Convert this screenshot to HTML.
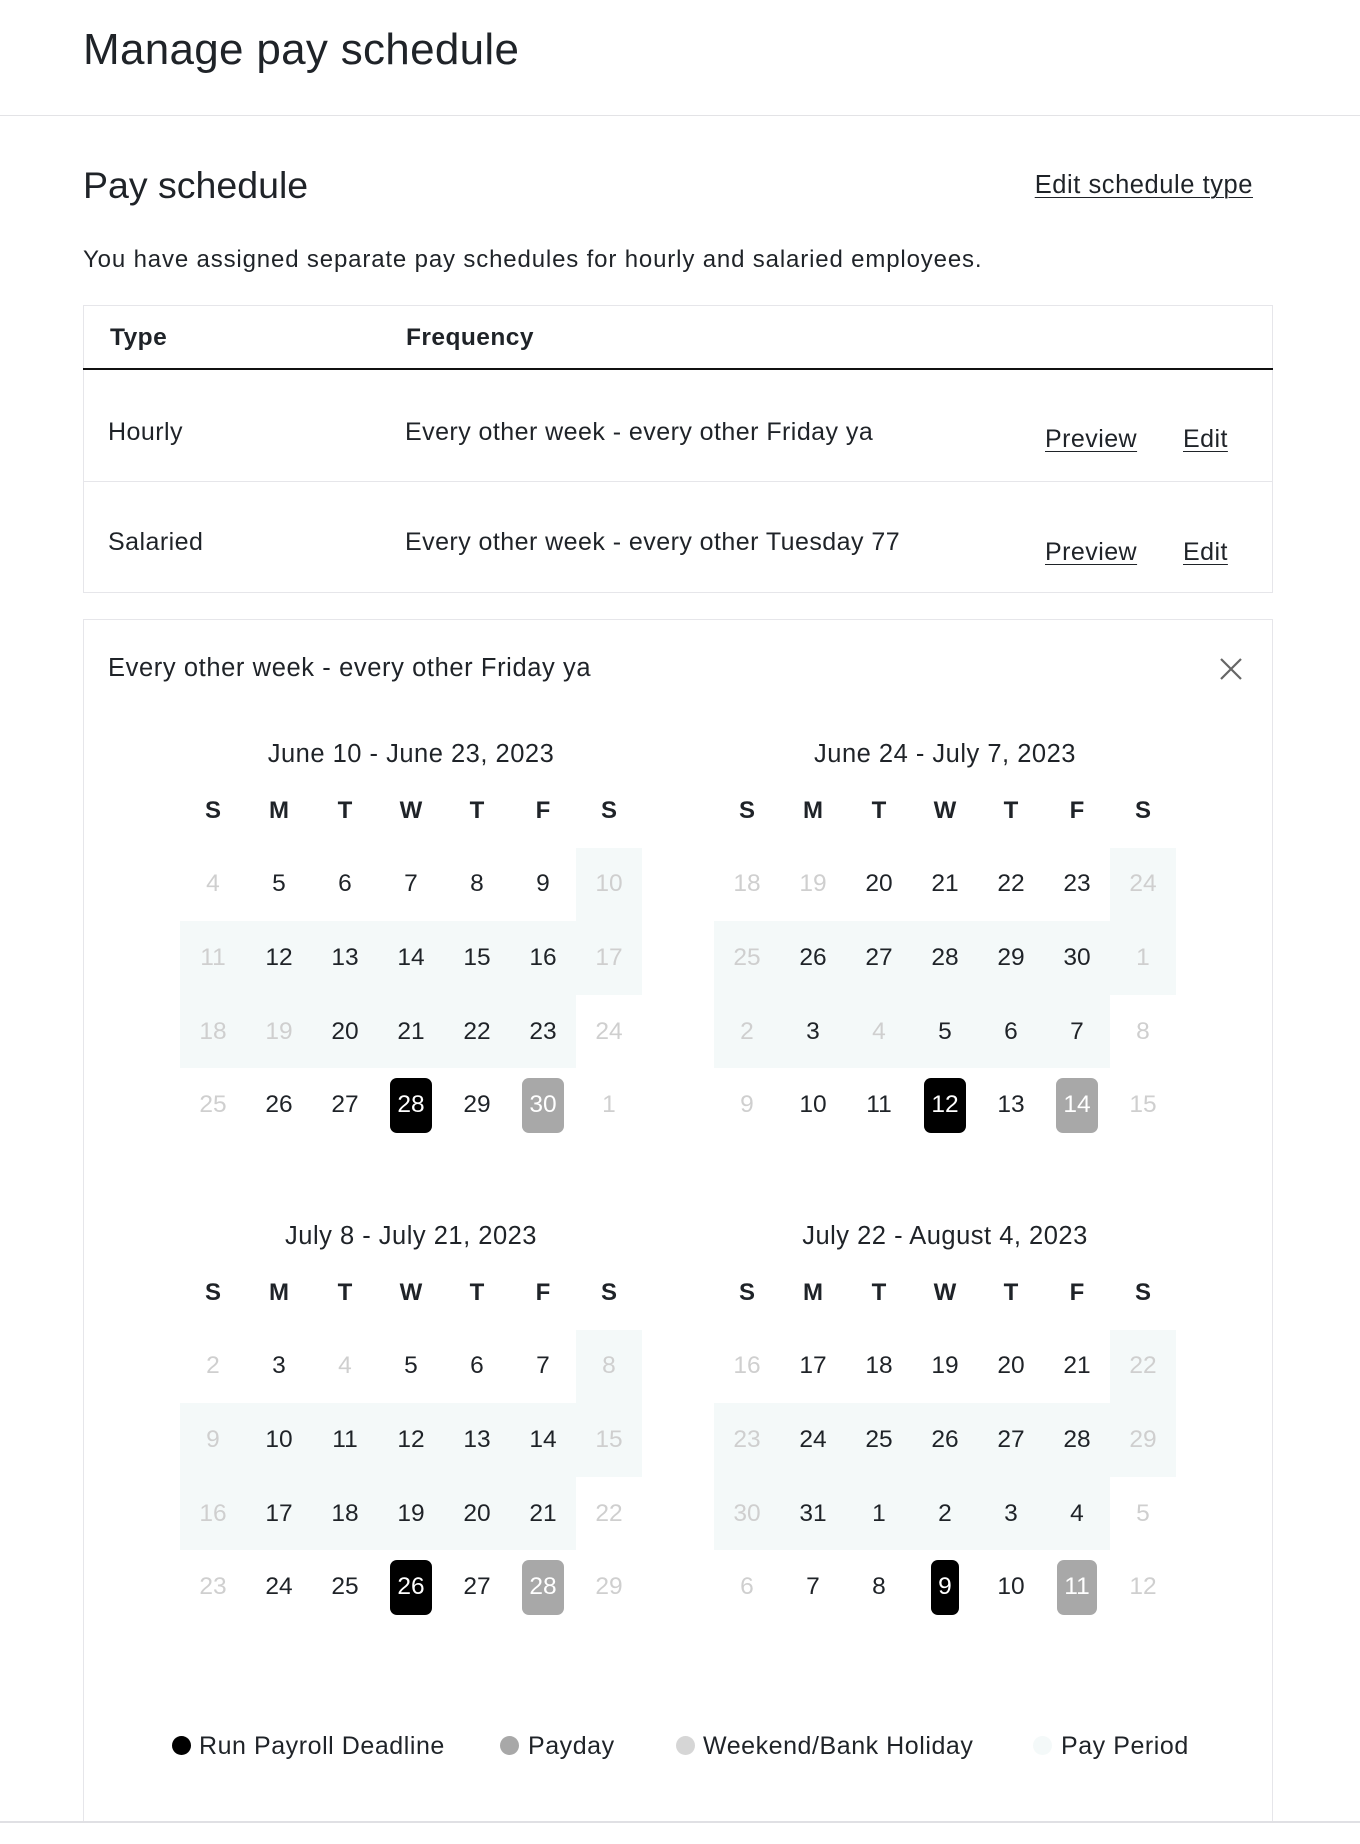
<!DOCTYPE html>
<html><head><meta charset="utf-8"><style>
*{margin:0;padding:0;box-sizing:border-box}
body{width:1360px;height:1844px;background:#fff;font-family:"Liberation Sans",sans-serif;color:#1f2328;position:relative;overflow:hidden}
.a{position:absolute;white-space:nowrap}
.t{font-size:25px;letter-spacing:0.45px;line-height:28px}
.u{text-decoration:underline;text-underline-offset:4px;text-decoration-thickness:1px}
.cal{position:absolute;width:462px}
.cal h3{font-weight:normal;font-size:25.5px;letter-spacing:0.5px;text-align:center;height:0;position:relative;top:-20px;line-height:0}
.g{display:grid;grid-template-columns:repeat(7,66px);grid-auto-rows:73.6px}
.g>i{font-style:normal;font-size:24.5px;display:flex;align-items:center;justify-content:center;color:#1f2328}
.g>i.h{font-weight:bold;font-size:24px}
.g>i.s{background:#f4f9f9}
.g>i.f{color:#cfcfcf}
.g b{font-weight:normal;display:inline-flex;align-items:center;justify-content:center;height:55px;padding:0 7px;border-radius:7px;color:#fff}
.k{background:#000}.p{background:#a8a8a8}
.dot{position:absolute;width:19px;height:19px;border-radius:50%}
</style></head><body>
<div class="a" style="left:83px;top:24px;font-size:44px;letter-spacing:0.3px;line-height:52px">Manage pay schedule</div>
<div class="a" style="left:0;top:115px;width:1360px;height:1px;background:#e3e3e6"></div>
<div class="a" style="left:83px;top:164px;font-size:37.5px;line-height:42px">Pay schedule</div>
<div class="a u t" style="right:107px;top:171px;font-size:25.5px;letter-spacing:0.55px">Edit schedule type</div>
<div class="a" style="left:83px;top:246px;font-size:24px;letter-spacing:0.85px;line-height:28px">You have assigned separate pay schedules for hourly and salaried employees.</div>

<div class="a" style="left:83px;top:305px;width:1190px;height:288px;border:1px solid #e6e6ea"></div>
<div class="a" style="left:83px;top:368px;width:1190px;height:2px;background:#111"></div>
<div class="a" style="left:83px;top:481px;width:1190px;height:1px;background:#e6e6ea"></div>
<div class="a t" style="left:110px;top:324px;font-weight:bold;font-size:24.5px">Type</div>
<div class="a t" style="left:406px;top:324px;font-weight:bold;font-size:24.5px">Frequency</div>
<div class="a t" style="left:108px;top:418px">Hourly</div>
<div class="a t" style="left:405px;top:418px">Every other week - every other Friday ya</div>
<div class="a u t" style="left:1045px;top:425px">Preview</div>
<div class="a u t" style="left:1183px;top:425px">Edit</div>
<div class="a t" style="left:108px;top:528px">Salaried</div>
<div class="a t" style="left:405px;top:528px">Every other week - every other Tuesday 77</div>
<div class="a u t" style="left:1045px;top:538px">Preview</div>
<div class="a u t" style="left:1183px;top:538px">Edit</div>

<div class="a" style="left:83px;top:619px;width:1190px;height:1204px;border:1px solid #e6e6ea;border-bottom:none"></div>
<div class="a" style="left:0;top:1821px;width:1360px;height:2px;background:#e0e0e4"></div>
<div class="a t" style="left:108px;top:654px;font-size:25.5px;letter-spacing:0.6px">Every other week - every other Friday ya</div>
<svg class="a" style="left:1218px;top:656px" width="26" height="26" viewBox="0 0 26 26"><path d="M3 3L23 23M23 3L3 23" stroke="#666" stroke-width="2.2" fill="none"/></svg>

<div class="cal" style="left:180px;top:774px"><h3>June 10 - June 23, 2023</h3><div class="g">
<i class="h">S</i><i class="h">M</i><i class="h">T</i><i class="h">W</i><i class="h">T</i><i class="h">F</i><i class="h">S</i>
<i class="f">4</i><i>5</i><i>6</i><i>7</i><i>8</i><i>9</i><i class="s f">10</i>
<i class="s f">11</i><i class="s">12</i><i class="s">13</i><i class="s">14</i><i class="s">15</i><i class="s">16</i><i class="s f">17</i>
<i class="s f">18</i><i class="s f">19</i><i class="s">20</i><i class="s">21</i><i class="s">22</i><i class="s">23</i><i class="f">24</i>
<i class="f">25</i><i>26</i><i>27</i><i><b class="k">28</b></i><i>29</i><i><b class="p">30</b></i><i class="f">1</i>
</div></div>

<div class="cal" style="left:714px;top:774px"><h3>June 24 - July 7, 2023</h3><div class="g">
<i class="h">S</i><i class="h">M</i><i class="h">T</i><i class="h">W</i><i class="h">T</i><i class="h">F</i><i class="h">S</i>
<i class="f">18</i><i class="f">19</i><i>20</i><i>21</i><i>22</i><i>23</i><i class="s f">24</i>
<i class="s f">25</i><i class="s">26</i><i class="s">27</i><i class="s">28</i><i class="s">29</i><i class="s">30</i><i class="s f">1</i>
<i class="s f">2</i><i class="s">3</i><i class="s f">4</i><i class="s">5</i><i class="s">6</i><i class="s">7</i><i class="f">8</i>
<i class="f">9</i><i>10</i><i>11</i><i><b class="k">12</b></i><i>13</i><i><b class="p">14</b></i><i class="f">15</i>
</div></div>

<div class="cal" style="left:180px;top:1256px"><h3>July 8 - July 21, 2023</h3><div class="g">
<i class="h">S</i><i class="h">M</i><i class="h">T</i><i class="h">W</i><i class="h">T</i><i class="h">F</i><i class="h">S</i>
<i class="f">2</i><i>3</i><i class="f">4</i><i>5</i><i>6</i><i>7</i><i class="s f">8</i>
<i class="s f">9</i><i class="s">10</i><i class="s">11</i><i class="s">12</i><i class="s">13</i><i class="s">14</i><i class="s f">15</i>
<i class="s f">16</i><i class="s">17</i><i class="s">18</i><i class="s">19</i><i class="s">20</i><i class="s">21</i><i class="f">22</i>
<i class="f">23</i><i>24</i><i>25</i><i><b class="k">26</b></i><i>27</i><i><b class="p">28</b></i><i class="f">29</i>
</div></div>

<div class="cal" style="left:714px;top:1256px"><h3>July 22 - August 4, 2023</h3><div class="g">
<i class="h">S</i><i class="h">M</i><i class="h">T</i><i class="h">W</i><i class="h">T</i><i class="h">F</i><i class="h">S</i>
<i class="f">16</i><i>17</i><i>18</i><i>19</i><i>20</i><i>21</i><i class="s f">22</i>
<i class="s f">23</i><i class="s">24</i><i class="s">25</i><i class="s">26</i><i class="s">27</i><i class="s">28</i><i class="s f">29</i>
<i class="s f">30</i><i class="s">31</i><i class="s">1</i><i class="s">2</i><i class="s">3</i><i class="s">4</i><i class="f">5</i>
<i class="f">6</i><i>7</i><i>8</i><i><b class="k">9</b></i><i>10</i><i><b class="p">11</b></i><i class="f">12</i>
</div></div>

<div class="dot" style="left:172px;top:1736px;background:#000"></div>
<div class="a t" style="left:199px;top:1732px;font-size:25px;letter-spacing:0.55px">Run Payroll Deadline</div>
<div class="dot" style="left:500px;top:1736px;background:#a8a8a8"></div>
<div class="a t" style="left:528px;top:1732px;font-size:25px;letter-spacing:0.55px">Payday</div>
<div class="dot" style="left:676px;top:1736px;background:#d6d6d6"></div>
<div class="a t" style="left:703px;top:1732px;font-size:25px;letter-spacing:0.55px">Weekend/Bank Holiday</div>
<div class="dot" style="left:1033px;top:1736px;background:#f4f9f9"></div>
<div class="a t" style="left:1061px;top:1732px;font-size:25px;letter-spacing:0.55px">Pay Period</div>
</body></html>
